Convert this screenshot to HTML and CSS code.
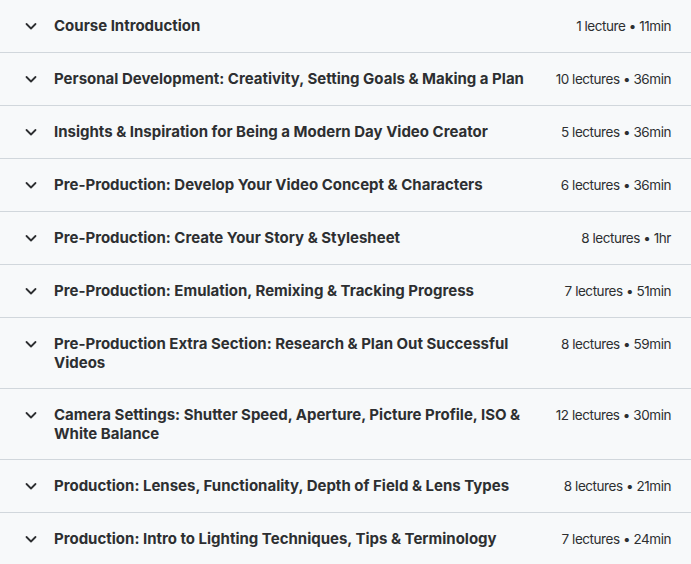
FILE: index.html
```html
<!DOCTYPE html>
<html lang="en">
<head>
<meta charset="utf-8">
<title>Course content</title>
<link rel="stylesheet" href="styles.css">
</head>
<body>
<div class="sections">
  <div class="section"><span class="chev"><svg viewBox="0 0 16 16" width="16" height="16"><path d="M3.5 6 L8 10.5 L12.5 6" fill="none" stroke="#2d2f31" stroke-width="1.8" stroke-linecap="round" stroke-linejoin="round"/></svg></span><span class="title">Course Introduction</span><span class="meta">1 lecture • 11min</span></div>
  <div class="section"><span class="chev"><svg viewBox="0 0 16 16" width="16" height="16"><path d="M3.5 6 L8 10.5 L12.5 6" fill="none" stroke="#2d2f31" stroke-width="1.8" stroke-linecap="round" stroke-linejoin="round"/></svg></span><span class="title">Personal Development: Creativity, Setting Goals &amp; Making a Plan</span><span class="meta">10 lectures • 36min</span></div>
  <div class="section"><span class="chev"><svg viewBox="0 0 16 16" width="16" height="16"><path d="M3.5 6 L8 10.5 L12.5 6" fill="none" stroke="#2d2f31" stroke-width="1.8" stroke-linecap="round" stroke-linejoin="round"/></svg></span><span class="title">Insights &amp; Inspiration for Being a Modern Day Video Creator</span><span class="meta">5 lectures • 36min</span></div>
  <div class="section"><span class="chev"><svg viewBox="0 0 16 16" width="16" height="16"><path d="M3.5 6 L8 10.5 L12.5 6" fill="none" stroke="#2d2f31" stroke-width="1.8" stroke-linecap="round" stroke-linejoin="round"/></svg></span><span class="title">Pre-Production: Develop Your Video Concept &amp; Characters</span><span class="meta">6 lectures • 36min</span></div>
  <div class="section"><span class="chev"><svg viewBox="0 0 16 16" width="16" height="16"><path d="M3.5 6 L8 10.5 L12.5 6" fill="none" stroke="#2d2f31" stroke-width="1.8" stroke-linecap="round" stroke-linejoin="round"/></svg></span><span class="title">Pre-Production: Create Your Story &amp; Stylesheet</span><span class="meta">8 lectures • 1hr</span></div>
  <div class="section"><span class="chev"><svg viewBox="0 0 16 16" width="16" height="16"><path d="M3.5 6 L8 10.5 L12.5 6" fill="none" stroke="#2d2f31" stroke-width="1.8" stroke-linecap="round" stroke-linejoin="round"/></svg></span><span class="title">Pre-Production: Emulation, Remixing &amp; Tracking Progress</span><span class="meta">7 lectures • 51min</span></div>
  <div class="section"><span class="chev"><svg viewBox="0 0 16 16" width="16" height="16"><path d="M3.5 6 L8 10.5 L12.5 6" fill="none" stroke="#2d2f31" stroke-width="1.8" stroke-linecap="round" stroke-linejoin="round"/></svg></span><span class="title">Pre-Production Extra Section: Research &amp; Plan Out Successful Videos</span><span class="meta">8 lectures • 59min</span></div>
  <div class="section"><span class="chev"><svg viewBox="0 0 16 16" width="16" height="16"><path d="M3.5 6 L8 10.5 L12.5 6" fill="none" stroke="#2d2f31" stroke-width="1.8" stroke-linecap="round" stroke-linejoin="round"/></svg></span><span class="title">Camera Settings: Shutter Speed, Aperture, Picture Profile, ISO &amp; White Balance</span><span class="meta">12 lectures • 30min</span></div>
  <div class="section"><span class="chev"><svg viewBox="0 0 16 16" width="16" height="16"><path d="M3.5 6 L8 10.5 L12.5 6" fill="none" stroke="#2d2f31" stroke-width="1.8" stroke-linecap="round" stroke-linejoin="round"/></svg></span><span class="title">Production: Lenses, Functionality, Depth of Field &amp; Lens Types</span><span class="meta">8 lectures • 21min</span></div>
  <div class="section"><span class="chev"><svg viewBox="0 0 16 16" width="16" height="16"><path d="M3.5 6 L8 10.5 L12.5 6" fill="none" stroke="#2d2f31" stroke-width="1.8" stroke-linecap="round" stroke-linejoin="round"/></svg></span><span class="title">Production: Intro to Lighting Techniques, Tips &amp; Terminology</span><span class="meta">7 lectures • 24min</span></div>
</div>
</body>
</html>
```
FILE: styles.css
```css
html, body {
  margin: 0;
  padding: 0;
  background: #f7f9fa;
}
body {
  font-family: Inter, "Noto Sans", sans-serif;
  color: #2d2f31;
  width: 691px;
  height: 564px;
  overflow: hidden;
}
.sections {
  display: flex;
  flex-direction: column;
}
.section {
  display: flex;
  align-items: flex-start;
  padding: 16px 20px 16px 23px;
  border-bottom: 1px solid #d1d7dc;
}
.chev {
  flex: none;
  width: 16px;
  height: 19px;
  display: flex;
  align-items: center;
  margin-right: 15px;
}
.chev svg { display: block; }
.title {
  flex: 1;
  font-size: 15px;
  font-weight: 700;
  line-height: 19px;
  margin-top: -0.5px;
  margin-bottom: 0.5px;
}
.meta {
  flex: none;
  margin-left: 20px;
  font-size: 13.5px;
  line-height: 20px;
  letter-spacing: -0.45px;
  margin-top: -0.5px;
  margin-bottom: 0.5px;
  white-space: nowrap;
  color: #2d2f31;
}
```
